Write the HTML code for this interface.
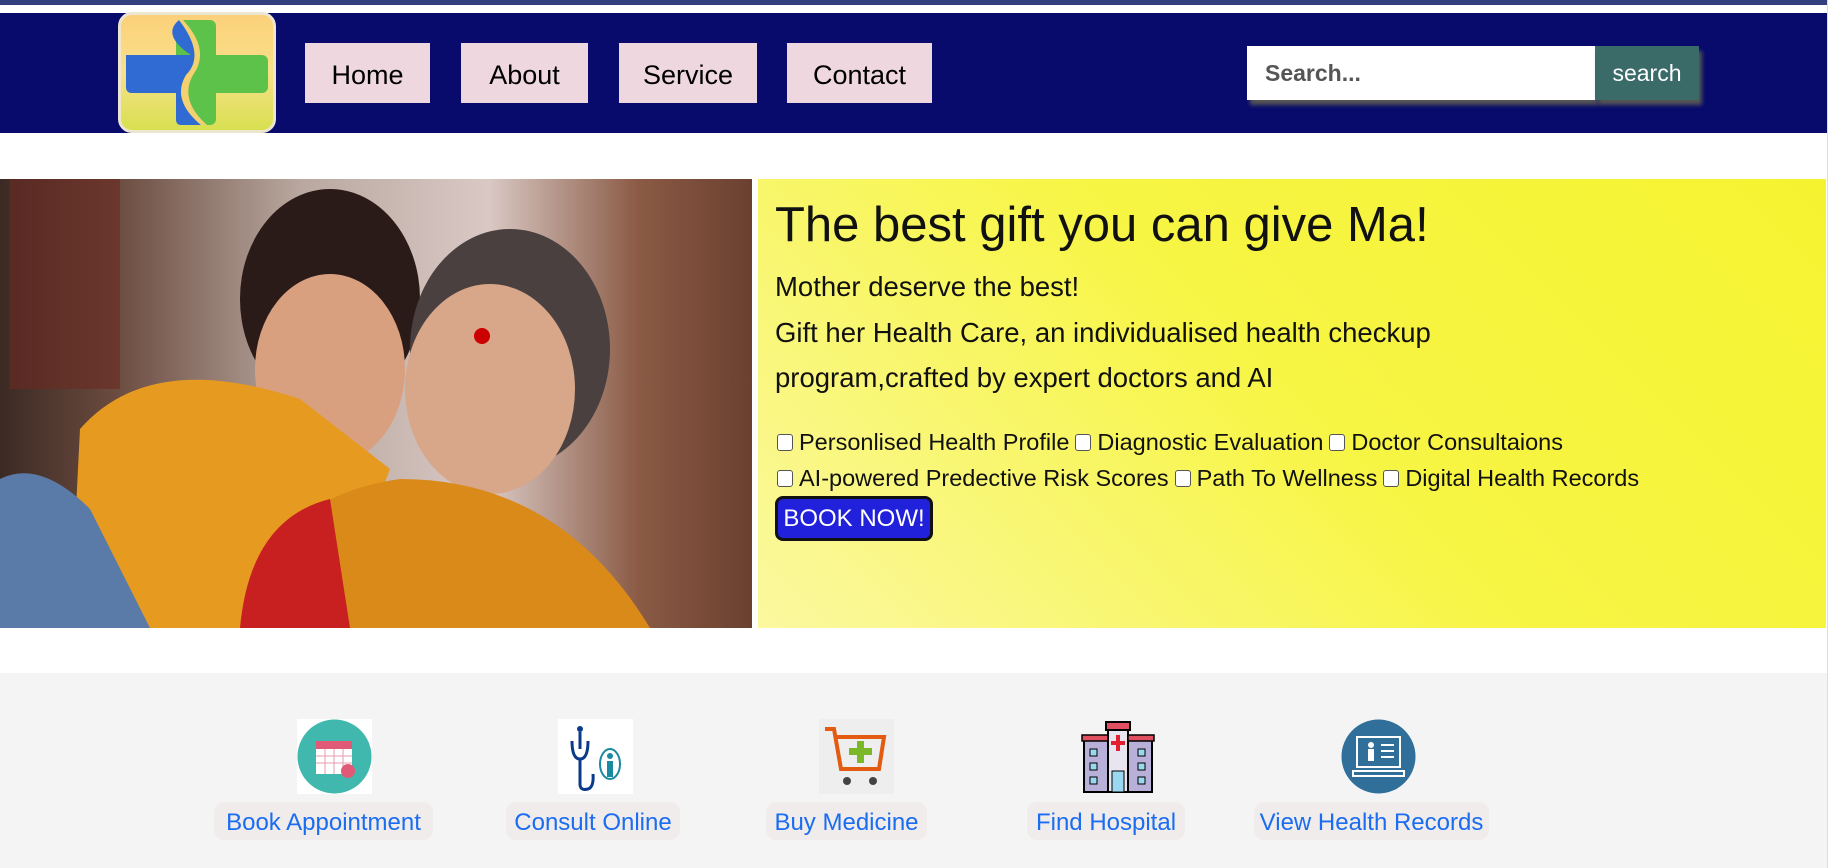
<!DOCTYPE html>
<html><head><meta charset="utf-8"><style>
*{margin:0;padding:0;box-sizing:border-box}
body{width:1834px;height:868px;overflow:hidden;background:#fff;font-family:"Liberation Sans",sans-serif;position:relative}
.abs{position:absolute}
.top{left:0;top:0;width:1827px;height:5px;background:#343f80}
.hdr{left:0;top:13px;width:1827px;height:120px;background:#080a6c}
.logo{left:118px;top:12px;width:158px;height:121px;border-radius:14px;background:linear-gradient(180deg,#fcd07a,#f8e08a 50%,#d8e050);border:3px solid #ece6d0;overflow:hidden}
.nav{top:43px;height:60px;background:#efd7e0;color:#000;font-size:27px;display:flex;align-items:center;justify-content:center;padding-top:5px}
.sin{left:1247px;top:46px;width:348px;height:54px;background:#fff;font-size:23px;color:#555;font-weight:bold;padding-left:18px;display:flex;align-items:center;box-shadow:3px 5px 4px #555}
.sbt{left:1595px;top:46px;width:104px;height:54px;background:#3b6b69;color:#fff;font-size:23px;display:flex;align-items:center;justify-content:center;box-shadow:3px 5px 4px #555}
.photo{left:0;top:179px;width:752px;height:449px;background:linear-gradient(90deg,#3b2a24 0%,#6a4a3e 15%,#b9a8a0 40%,#d9c8c4 65%,#8a5a44 85%,#6b4030 100%)}
.yel{left:758px;top:179px;width:1068px;height:449px;background:linear-gradient(225deg,#f5f330 0%,#f7f545 50%,#fbf8a0 100%);color:#111}
h1{position:absolute;left:17px;top:18px;font-size:49px;font-weight:normal;white-space:nowrap}
.p{position:absolute;left:17px;font-size:27.5px;white-space:nowrap}
.cb{position:absolute;left:17px;font-size:23.5px;white-space:nowrap;display:flex;align-items:center}
.cb i{display:inline-block;width:16px;height:17px;border:1.5px solid #555;border-radius:3px;background:#fff;margin:0 6px 0 2px}
.bk{left:17px;top:317px;width:158px;height:45px;background:#2121dc;border:3px solid #111;border-radius:8px;color:#fff;font-size:24px;display:flex;align-items:center;justify-content:center}
.gray{left:0;top:673px;width:1827px;height:195px;background:#f4f4f4}
.ic{top:719px;width:75px;height:75px}
.lb{top:802px;height:38px;background:#f1ecec;border-radius:10px;color:#1a6cf0;font-size:24px;display:flex;align-items:center;justify-content:center;white-space:nowrap;padding-top:3px}
.sb{left:1827px;top:0;width:7px;height:868px;background:#fff;border-left:1px solid #ddd}
</style></head><body>
<div class="abs top"></div>
<div class="abs hdr"></div>
<div class="abs logo"><svg width="152" height="115" viewBox="0 0 152 115"><rect x="55" y="5" width="40" height="105" rx="6" fill="#5cc24a"/><rect x="5" y="40" width="142" height="38" rx="6" fill="#5cc24a"/><path d="M5 40 H70 Q40 20 58 5 Q85 40 65 60 Q50 85 80 110 H60 Q55 110 55 104 V78 H11 Q5 78 5 72 Z" fill="#2f6bd3"/><path d="M58 5 Q85 40 65 60 Q50 85 80 110 L86 110 Q58 85 72 60 Q90 35 62 5Z" fill="#f3d070"/></svg></div>
<div class="abs nav" style="left:305px;width:125px">Home</div>
<div class="abs nav" style="left:461px;width:127px">About</div>
<div class="abs nav" style="left:619px;width:138px">Service</div>
<div class="abs nav" style="left:787px;width:145px">Contact</div>
<div class="abs sin">Search...</div>
<div class="abs sbt">search</div>
<div class="abs photo">
<svg width="752" height="449"><rect x="10" y="0" width="110" height="210" fill="#6a2a22" opacity=".6"/><ellipse cx="330" cy="120" rx="90" ry="110" fill="#2a1a18"/><ellipse cx="510" cy="170" rx="100" ry="120" fill="#4a4040"/><ellipse cx="330" cy="190" rx="75" ry="95" fill="#d9a080"/><ellipse cx="490" cy="210" rx="85" ry="105" fill="#d8a688"/><path d="M70 449 L80 250 Q150 170 300 220 L390 290 L330 449Z" fill="#e69a20"/><path d="M0 449 L0 300 Q40 280 90 330 L150 449Z" fill="#5a7aa8"/><path d="M250 449 Q260 320 400 300 Q560 300 650 449Z" fill="#d98a18"/><path d="M240 449 Q250 340 330 320 L350 449Z" fill="#c82020"/><circle cx="482" cy="157" r="8" fill="#c00"/></svg>
</div>
<div class="abs yel">
<h1>The best gift you can give Ma!</h1>
<div class="p" style="top:92px">Mother deserve the best!</div>
<div class="p" style="top:138px">Gift her Health Care, an individualised health checkup</div>
<div class="p" style="top:183px">program,crafted by expert doctors and AI</div>
<div class="cb" style="top:250px"><i></i>Personlised Health Profile <i style="margin-left:6px"></i>Diagnostic Evaluation <i style="margin-left:6px"></i>Doctor Consultaions</div>
<div class="cb" style="top:286px"><i></i>AI-powered Predective Risk Scores <i style="margin-left:6px"></i>Path To Wellness <i style="margin-left:6px"></i>Digital Health Records</div>
<div class="abs bk">BOOK NOW!</div>
</div>
<div class="abs gray"></div>
<svg class="abs ic" style="left:297px" viewBox="0 0 75 75"><rect width="75" height="75" fill="#fff"/><circle cx="37.5" cy="37.5" r="37" fill="#41b8ad"/><rect x="19" y="22" width="36" height="33" fill="#fff"/><rect x="19" y="22" width="36" height="8" fill="#e05a78"/><g stroke="#e59aae" stroke-width="1"><path d="M19 37H55M19 44H55M28 30V55M37 30V55M46 30V55"/></g><circle cx="51" cy="52" r="7" fill="#e05a78"/></svg>
<svg class="abs ic" style="left:558px" viewBox="0 0 75 75"><rect width="75" height="75" fill="#fff"/><circle cx="22" cy="10" r="3" fill="#0a3a8a"/><path d="M22 13V30M14 22Q14 40 22 40Q30 40 30 22M22 40V65Q22 72 30 70Q36 68 35 55" stroke="#0a3a8a" stroke-width="3" fill="none"/><ellipse cx="52" cy="45" rx="10" ry="15" fill="none" stroke="#1a8aa0" stroke-width="2"/><rect x="49" y="42" width="6" height="16" fill="#1a8aa0"/><circle cx="52" cy="37" r="3" fill="#1a8aa0"/></svg>
<svg class="abs ic" style="left:819px" viewBox="0 0 75 75"><rect width="75" height="75" fill="#eee"/><path d="M6 10H15L22 50H60L65 18H18" stroke="#e35a10" stroke-width="4" fill="none"/><rect x="38" y="22" width="7" height="22" fill="#7ab82a"/><rect x="30" y="29" width="23" height="7" fill="#7ab82a"/><circle cx="28" cy="62" r="4" fill="#444"/><circle cx="54" cy="62" r="4" fill="#444"/></svg>
<svg class="abs ic" style="left:1080px" viewBox="0 0 75 75"><rect x="26" y="3" width="24" height="8" fill="#e05060" stroke="#000" stroke-width="2"/><rect x="28" y="11" width="20" height="62" fill="#e8e4f0" stroke="#000" stroke-width="2"/><rect x="4" y="20" width="24" height="53" fill="#b8b0d8" stroke="#000" stroke-width="2"/><rect x="48" y="20" width="24" height="53" fill="#b8b0d8" stroke="#000" stroke-width="2"/><rect x="2" y="16" width="26" height="6" fill="#e05060" stroke="#000" stroke-width="1.5"/><rect x="48" y="16" width="26" height="6" fill="#e05060" stroke="#000" stroke-width="1.5"/><path d="M38 16V32M31 24H45" stroke="#e02030" stroke-width="4"/><rect x="32" y="52" width="12" height="21" fill="#9ad8f0" stroke="#000"/><g fill="#9ad8f0" stroke="#000"><rect x="10" y="30" width="7" height="7"/><rect x="10" y="44" width="7" height="7"/><rect x="10" y="58" width="7" height="7"/><rect x="58" y="30" width="7" height="7"/><rect x="58" y="44" width="7" height="7"/><rect x="58" y="58" width="7" height="7"/></g></svg>
<svg class="abs ic" style="left:1341px" viewBox="0 0 75 75"><circle cx="37.5" cy="37.5" r="37" fill="#2f6f9a"/><rect x="16" y="18" width="43" height="30" fill="none" stroke="#fff" stroke-width="2"/><path d="M12 52H63V57H12Z" fill="none" stroke="#fff" stroke-width="2"/><circle cx="30" cy="26" r="3" fill="#fff"/><rect x="27" y="30" width="6" height="12" fill="#fff"/><path d="M40 26H53M40 32H53M40 38H53" stroke="#fff" stroke-width="2"/></svg>
<div class="abs lb" style="left:214px;width:219px">Book Appointment</div>
<div class="abs lb" style="left:506px;width:174px">Consult Online</div>
<div class="abs lb" style="left:766px;width:161px">Buy Medicine</div>
<div class="abs lb" style="left:1027px;width:158px">Find Hospital</div>
<div class="abs lb" style="left:1254px;width:235px">View Health Records</div>
<div class="abs sb"></div>
</body></html>
